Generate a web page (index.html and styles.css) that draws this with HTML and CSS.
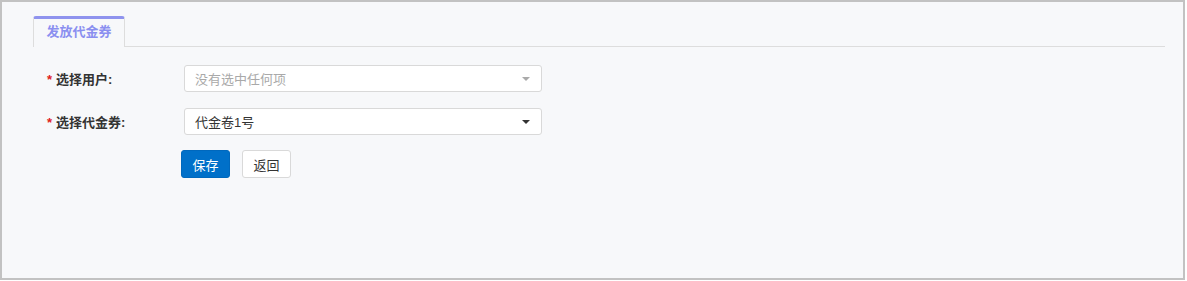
FILE: index.html
```html
<!DOCTYPE html>
<html lang="zh-CN">
<head>
    <meta charset="UTF-8">
    <meta name="viewport" content="width=device-width, initial-scale=1.0">
    <title>发放代金券</title>
    <link rel="stylesheet" href="styles.css">
</head>
<body>
    <div class="page">
        <div class="tab-bar">
            <span class="tab active">发放代金券</span>
        </div>

        <form class="voucher-form">
            <div class="form-row">
                <label class="form-label"><span class="required">*</span>选择用户:</label>
                <div class="select placeholder">
                    <span class="select-text">没有选中任何项</span>
                    <span class="caret"></span>
                </div>
            </div>
            <div class="form-row">
                <label class="form-label"><span class="required">*</span>选择代金券:</label>
                <div class="select">
                    <span class="select-text">代金卷1号</span>
                    <span class="caret"></span>
                </div>
            </div>
            <div class="form-actions">
                <button type="button" class="btn btn-primary">保存</button>
                <button type="button" class="btn btn-default">返回</button>
            </div>
        </form>
    </div>
</body>
</html>
```

FILE: styles.css
```css
* {
    box-sizing: border-box;
    font-family: 'Liberation Sans', 'Noto Sans CJK SC', sans-serif;
}

body {
    margin: 0;
    padding: 0;
    background-color: #ffffff;
    color: #333;
    font-size: 13px;
}

.page {
    width: 1185px;
    height: 280px;
    border: 2px solid #c2c2c2;
    background-color: #f7f8fa;
    padding: 14px 18px 0 31px;
}

.tab-bar {
    display: flex;
    border-bottom: 1px solid #dddddd;
    height: 31px;
}

.tab {
    width: 92px;
    height: 31px;
    text-align: center;
    border: 1px solid #dddddd;
    border-top: 3px solid #8f93ee;
    border-bottom: none;
    border-radius: 3px 3px 0 0;
    background-color: #f7f8fa;
    color: #8a8ff0;
    font-size: 13px;
    font-weight: bold;
    line-height: 26px;
    margin-bottom: -1px;
}

.voucher-form {
    padding: 18px 0 0 14px;
}

.form-row {
    display: flex;
    align-items: center;
    margin-bottom: 16px;
}

.form-label {
    width: 137px;
    font-weight: bold;
    color: #333;
}

.required {
    color: #e02020;
    margin-right: 4px;
}

.select {
    width: 358px;
    height: 27px;
    display: flex;
    align-items: center;
    justify-content: space-between;
    padding: 0 11px 0 10px;
    background-color: #fff;
    border: 1px solid #d9d9d9;
    border-radius: 3px;
}

.select-text {
    color: #333;
}

.placeholder .select-text {
    color: #a9a9a9;
}

.caret {
    width: 0;
    height: 0;
    border-left: 4px solid transparent;
    border-right: 4px solid transparent;
    border-top: 4px solid #333;
}

.placeholder .caret {
    border-top-color: #aaa;
}

.form-actions {
    display: flex;
    gap: 12px;
    padding-left: 134px;
    margin-top: -1px;
}

.btn {
    height: 28px;
    width: 49px;
    font-size: 13px;
    border-radius: 3px;
    cursor: pointer;
    padding: 0;
}

.btn-primary {
    background-color: #0070c9;
    border: 1px solid #0068bd;
    color: #fff;
}

.btn-default {
    background-color: #fff;
    border: 1px solid #d9d9d9;
    color: #333;
}
```
